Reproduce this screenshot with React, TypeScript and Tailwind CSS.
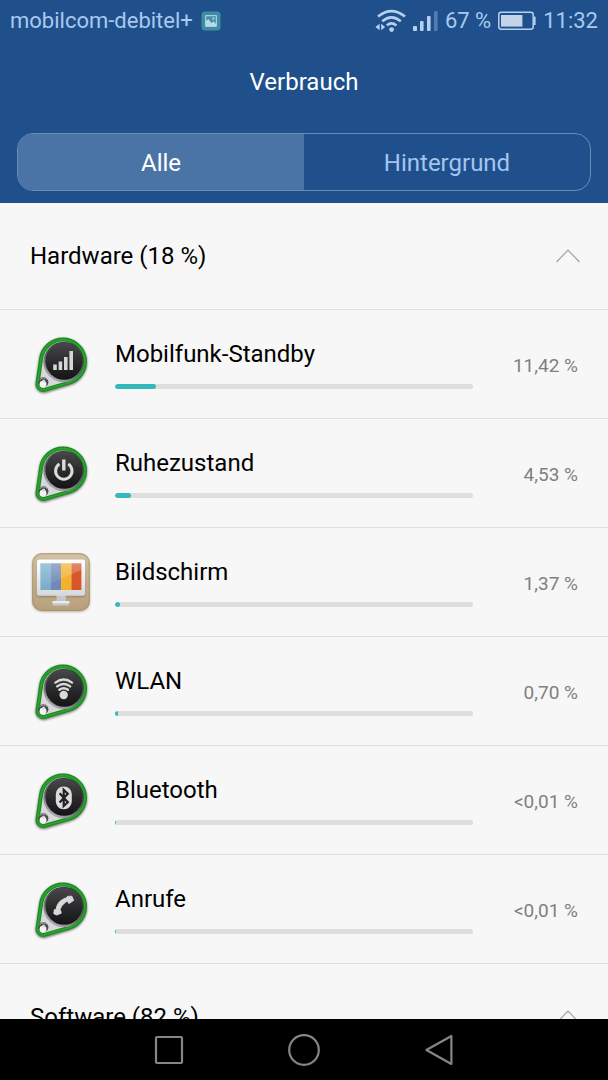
import React, { useState } from 'react';
import clsx from 'clsx';

type Glyph = 'signal' | 'power' | 'screen' | 'wifi' | 'bluetooth' | 'phone';

interface UsageItem {
  id: Glyph;
  name: string;
  value: string;
  percent: number;
}

const HARDWARE: UsageItem[] = [
  { id: 'signal', name: 'Mobilfunk-Standby', value: '11,42 %', percent: 11.42 },
  { id: 'power', name: 'Ruhezustand', value: '4,53 %', percent: 4.53 },
  { id: 'screen', name: 'Bildschirm', value: '1,37 %', percent: 1.37 },
  { id: 'wifi', name: 'WLAN', value: '0,70 %', percent: 0.7 },
  { id: 'bluetooth', name: 'Bluetooth', value: '<0,01 %', percent: 0.01 },
  { id: 'phone', name: 'Anrufe', value: '<0,01 %', percent: 0.01 },
];

const TABS = ['Alle', 'Hintergrund'];

// Gradients shared by all icons of the list
function IconDefs() {
  return (
    <svg className="absolute w-0 h-0" aria-hidden="true">
      <defs>
        <linearGradient id="disc" x1="0" y1="0" x2="0" y2="1">
          <stop offset="0" stopColor="#48484a" />
          <stop offset="0.55" stopColor="#29292b" />
          <stop offset="1" stopColor="#141415" />
        </linearGradient>
        <linearGradient id="rim" x1="0.8" y1="0" x2="0.2" y2="1">
          <stop offset="0" stopColor="#2c2c2e" />
          <stop offset="0.6" stopColor="#6b6a6f" />
          <stop offset="1" stopColor="#b9b5bd" />
        </linearGradient>
        <linearGradient id="tan" x1="0" y1="0" x2="0" y2="1">
          <stop offset="0" stopColor="#d3c3a8" />
          <stop offset="1" stopColor="#b79f7b" />
        </linearGradient>
        <linearGradient id="frame" x1="0" y1="0" x2="0" y2="1">
          <stop offset="0" stopColor="#ffffff" />
          <stop offset="1" stopColor="#d5d8dc" />
        </linearGradient>
        <linearGradient id="shine" x1="0" y1="0" x2="0" y2="1">
          <stop offset="0" stopColor="#ffffff" stopOpacity="0.3" />
          <stop offset="1" stopColor="#ffffff" stopOpacity="0" />
        </linearGradient>
        <filter id="soft" x="-20%" y="-20%" width="140%" height="140%">
          <feGaussianBlur stdDeviation="1.2" />
        </filter>
      </defs>
    </svg>
  );
}

function FobGlyph({ glyph }: { glyph: Glyph }) {
  switch (glyph) {
    case 'signal':
      return (
        <g fill="#d6d6d6">
          <rect x="22.2" y="30.5" width="3.6" height="5.5" />
          <rect x="27.6" y="27.5" width="3.6" height="8.5" />
          <rect x="33" y="23" width="3.6" height="13" />
          <rect x="38.4" y="17" width="3.6" height="19" />
        </g>
      );
    case 'power':
      return (
        <g fill="none" stroke="#dcdcdc" strokeWidth="3">
          <path d="M28.4 21.1A8.2 8.2 0 1 0 37.2 21.1" />
          <path d="M32.8 16.5V27.5" strokeWidth="3.4" />
        </g>
      );
    case 'wifi':
      return (
        <g fill="none" stroke="#dadada" strokeWidth="2.4" strokeLinecap="round">
          <circle cx="32.7" cy="34" r="4.2" fill="#dadada" stroke="none" />
          <path d="M24.4 21.6Q32.7 15.6 41 21.6" />
          <path d="M26.2 25.4Q32.7 20.6 39.2 25.4" />
          <path d="M28.4 28.8Q32.7 25.6 37 28.8" />
        </g>
      );
    case 'bluetooth':
      return (
        <g>
          <rect x="24.8" y="16.6" width="16" height="22.6" rx="7.6" fill="#dcdcdc" />
          <path
            d="M28.6 23.2L36.8 32.2L32.7 36V19.8L36.8 23.8L28.6 32.6"
            fill="none"
            stroke="#222224"
            strokeWidth="2.2"
          />
        </g>
      );
    case 'phone':
      return (
        <g fill="#d8d8d8">
          <path d="M24.6 33.2C24 25.4 29.6 19.2 37.6 17.8L39 21.4C34 23 30.2 26.8 29.2 31.8Z" />
          <path d="M36.4 17.4L40.8 17.2L42.6 21.4L37.8 24.6L35.6 20Z" strokeLinejoin="round" stroke="#d8d8d8" />
          <path d="M23.4 30.6L29.6 31.4L30.2 34.2L25.6 36L22.8 34.6Z" strokeLinejoin="round" stroke="#d8d8d8" />
        </g>
      );
    default:
      return null;
  }
}

const FOB_PATH = 'M10.2 24.3A22 22 0 1 1 38.3 48.6L14.2 55.7A6 6 0 0 1 6.6 49.1Z';

function FobIcon({ glyph }: { glyph: Glyph }) {
  return (
    <svg viewBox="0 0 60 60" className="w-[60px] h-[60px] shrink-0 overflow-visible" aria-hidden="true">
      <path d={FOB_PATH} fill="none" stroke="#000" strokeOpacity="0.5" strokeWidth="4.6" filter="url(#soft)" transform="translate(0 1)" />
      <path d={FOB_PATH} fill="#d8d8da" stroke="#1a8a20" strokeWidth="4" />
      <path d={FOB_PATH} fill="none" stroke="#27a42d" strokeWidth="1.8" />
      <circle cx="32.6" cy="28" r="20.2" fill="url(#rim)" />
      <circle cx="33" cy="27.2" r="18.6" fill="url(#disc)" />
      <circle cx="12.4" cy="48.2" r="5" fill="#4b4b4d" />
      <path d="M8.4 46.2A5 5 0 0 1 16.4 45.6" fill="none" stroke="#a9a9ab" strokeWidth="1" />
      <circle cx="12" cy="50.2" r="3.4" fill="#f4f4f4" />
      <circle cx="12.6" cy="47" r="1.5" fill="#d7d7d7" />
      <FobGlyph glyph={glyph} />
    </svg>
  );
}

function ScreenIcon() {
  return (
    <svg viewBox="0 0 60 60" className="w-[60px] h-[60px] shrink-0 overflow-visible" aria-hidden="true">
      <rect x="1" y="2" width="58" height="58" rx="10" fill="#6e5c40" opacity="0.45" filter="url(#soft)" />
      <rect x="1" y="1" width="58" height="58" rx="10" fill="url(#tan)" />
      <rect x="1.8" y="1.8" width="56.4" height="56.4" rx="9.4" fill="none" stroke="#a18b68" strokeOpacity="0.5" strokeWidth="1.4" />
      <rect x="5.6" y="8.6" width="48.8" height="36.4" rx="2.4" fill="#7d6a4b" opacity="0.6" filter="url(#soft)" />
      <path d="M25.6 43H34.8V49H38V53.4H21.6V49H25.6Z" fill="#c4c8cd" />
      <rect x="21.6" y="49" width="16.8" height="2.2" fill="#e9ebee" />
      <rect x="5.8" y="7.4" width="48.4" height="36.4" rx="2.4" fill="url(#frame)" />
      <rect x="9.4" y="11.4" width="10.6" height="26.6" fill="#78aeca" />
      <rect x="20" y="11.4" width="10" height="26.6" fill="#7288ba" />
      <rect x="30" y="11.4" width="10.4" height="26.6" fill="#f2b32a" />
      <rect x="40.4" y="11.4" width="10" height="26.6" fill="#d9552b" />
      <path d="M9.4 11.4H50.4V18L9.4 36Z" fill="url(#shine)" />
    </svg>
  );
}

function Chevron() {
  return (
    <svg viewBox="0 0 24 14" className="w-6 h-[14px]" fill="none" stroke="#a3a3a3" strokeWidth="1.2" aria-hidden="true">
      <path d="M0.5 13L12 1L23.5 13" />
    </svg>
  );
}

function SectionHeader({ label }: { label: string }) {
  return (
    <button
      type="button"
      className="w-full h-[107px] shrink-0 flex items-center justify-between pl-[30px] pr-7 border-b border-[#dedede] text-2xl leading-7 text-black"
    >
      <span>{label}</span>
      <Chevron />
    </button>
  );
}

function UsageRow({ item }: { item: UsageItem }) {
  return (
    <li className="h-[109px] flex items-center pl-[31px] pr-[30px] border-b border-[#dedede]">
      {item.id === 'screen' ? <ScreenIcon /> : <FobIcon glyph={item.id} />}
      <div className="flex-1 ml-6">
        <p className="text-2xl leading-7 text-black">{item.name}</p>
        <div
          role="progressbar"
          aria-label={item.name}
          aria-valuenow={item.percent}
          className="mt-4 h-[5px] rounded-full bg-[#dedede] overflow-hidden"
        >
          <div className="h-full min-w-px rounded-full bg-[#34b9bb]" style={{ width: `${item.percent}%` }} />
        </div>
      </div>
      <span className="w-[105px] pt-1 text-right text-[19px] leading-6 text-[#808080]">{item.value}</span>
    </li>
  );
}

function StatusBar() {
  return (
    <div className="h-[41px] flex items-center justify-between px-[10px] text-[22px] leading-7 text-[#a9c9f0]">
      <div className="flex items-center gap-2">
        <span>mobilcom-debitel+</span>
        <svg viewBox="0 0 20 20" className="w-5 h-5" aria-hidden="true">
          <rect x="0.5" y="0.5" width="19" height="19" rx="3.5" fill="#3f8da3" />
          <rect x="4.6" y="4.6" width="10.8" height="10.8" rx="0.6" fill="#4691a8" stroke="#a9d0e2" strokeWidth="1.2" />
          <path d="M5 9.4L7.6 8.2L10.4 12L12.6 10.4L15 13V15H5Z" fill="#b9d9ea" />
          <circle cx="12.4" cy="7.6" r="1.1" fill="#b9d9ea" />
        </svg>
      </div>
      <div className="flex items-center gap-[7px]">
        <svg viewBox="0 0 31 24" className="w-[31px] h-6" fill="none" stroke="#b4d0f2" strokeWidth="2.6" aria-hidden="true">
          <path d="M3 7.6Q16.5 -3.4 30 7.6" />
          <path d="M7.2 12.2Q16.5 4.4 25.8 12.2" />
          <path d="M11.8 16.4Q16.5 12.2 21.4 16.4" />
          <circle cx="16.6" cy="20.6" r="2.4" fill="#b4d0f2" stroke="none" />
          <path d="M4.6 14.8V21.2L0.4 18ZM6.2 14.8V21.2L10.2 18Z" fill="#b4d0f2" stroke="none" />
        </svg>
        <svg viewBox="0 0 25 22" className="w-[25px] h-[22px]" fill="#b4d0f2" aria-hidden="true">
          <rect x="0" y="16" width="4" height="5" rx="1" />
          <rect x="7" y="11" width="3.6" height="10" rx="1" />
          <rect x="14" y="6" width="3.6" height="15" rx="1" />
          <rect x="21" y="1" width="3.6" height="20" rx="1" opacity="0.35" />
        </svg>
        <span>67 %</span>
        <svg viewBox="0 0 38 20" className="w-[38px] h-5" aria-hidden="true">
          <rect x="0.8" y="1.2" width="34.4" height="17" rx="2.4" fill="none" stroke="#b4d0f2" strokeWidth="1.5" />
          <rect x="3" y="4" width="21.4" height="11.6" fill="#c3d3ea" />
          <path d="M36.6 5.6V14" stroke="#b4d0f2" strokeWidth="2" />
        </svg>
        <span>11:32</span>
      </div>
    </div>
  );
}

export default function App() {
  const [activeTab, setActiveTab] = useState('Alle');

  return (
    <div className="h-dvh flex flex-col bg-[#f7f7f7] font-['Roboto',sans-serif]">
      <IconDefs />
      <header className="shrink-0 bg-[#20508b] pb-3">
        <StatusBar />
        <h1 className="h-[92px] pt-[27px] text-center text-2xl leading-7 text-white">Verbrauch</h1>
        <div className="mx-[17px] h-[58px] flex rounded-2xl border border-[#688cb8] overflow-hidden">
          {TABS.map((tab) => (
            <button
              key={tab}
              type="button"
              aria-pressed={tab === activeTab}
              onClick={() => setActiveTab(tab)}
              className={clsx(
                'flex-1 pt-0.5 text-2xl leading-7',
                tab === activeTab ? 'bg-[#4b74a6] text-white' : 'text-[#a3c5f0]'
              )}
            >
              {tab}
            </button>
          ))}
        </div>
      </header>

      <main className="flex-1 min-h-0 overflow-hidden">
        <SectionHeader label="Hardware (18 %)" />
        <ul>
          {HARDWARE.map((item) => (
            <UsageRow key={item.id} item={item} />
          ))}
        </ul>
        <SectionHeader label="Software (82 %)" />
      </main>

      <nav className="shrink-0 h-[61px] bg-black flex items-center justify-center">
        <button type="button" aria-label="Letzte Apps" className="w-[135px] flex justify-center">
          <svg viewBox="0 0 32 32" className="w-8 h-8" fill="none" stroke="#858585" strokeWidth="2.2">
            <rect x="3" y="3" width="26" height="26" rx="1" />
          </svg>
        </button>
        <button type="button" aria-label="Startseite" className="w-[135px] flex justify-center">
          <svg viewBox="0 0 32 32" className="w-8 h-8" fill="none" stroke="#858585" strokeWidth="2.2">
            <circle cx="16" cy="16" r="14.8" />
          </svg>
        </button>
        <button type="button" aria-label="Zurück" className="w-[135px] flex justify-center">
          <svg viewBox="0 0 32 32" className="w-8 h-8" fill="none" stroke="#858585" strokeWidth="2.2" strokeLinejoin="round">
            <path d="M28.4 2V30L3.4 16Z" />
          </svg>
        </button>
      </nav>
    </div>
  );
}
